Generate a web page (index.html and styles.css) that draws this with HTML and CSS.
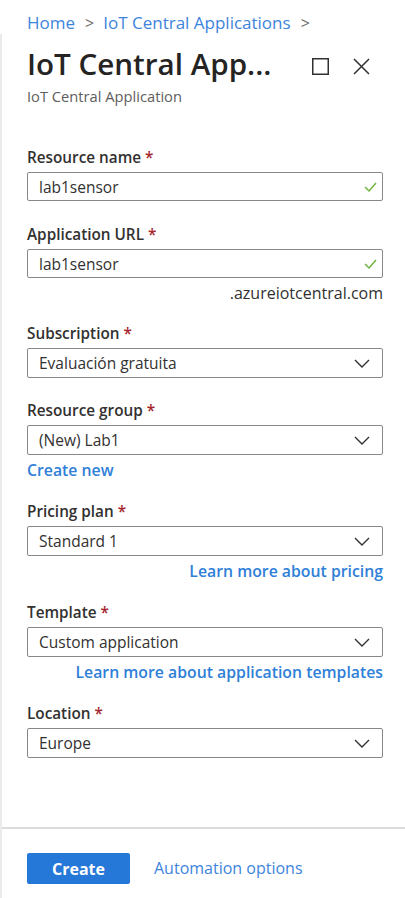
FILE: index.html
```html
<!DOCTYPE html>
<html lang="en">
<head>
<meta charset="utf-8">
<link rel="stylesheet" href="styles.css">
</head>
<body>
<nav class="crumbs">
  <a>Home</a><span class="sep">&gt;</span><a>IoT Central Applications</a><span class="sep">&gt;</span>
</nav>
<div class="panel">
  <header class="head">
    <div class="titles">
      <h1>IoT Central App...</h1>
      <div class="sub">IoT Central Application</div>
    </div>
    <div class="tools">
      <svg width="17" height="17" viewBox="0 0 17 17"><rect x="0.75" y="0.75" width="15.5" height="15.5" fill="none" stroke="#323130" stroke-width="1.5"/></svg>
      <svg width="17" height="17" viewBox="0 0 17 17"><path d="M1 1L16 16M16 1L1 16" stroke="#323130" stroke-width="1.5" fill="none"/></svg>
    </div>
  </header>
  <main class="form">
    <div class="field tall">
      <div class="label">Resource name <span class="req">*</span></div>
      <div class="box input"><span>lab1sensor</span><svg class="ok" width="13" height="10" viewBox="0 0 13 10"><path d="M1 5l4 4 7-8" stroke="#6bb33a" stroke-width="1.4" fill="none"/></svg></div>
    </div>
    <div class="field">
      <div class="label">Application URL <span class="req">*</span></div>
      <div class="box input"><span>lab1sensor</span><svg class="ok" width="13" height="10" viewBox="0 0 13 10"><path d="M1 5l4 4 7-8" stroke="#6bb33a" stroke-width="1.4" fill="none"/></svg></div>
      <div class="suffix">.azureiotcentral.com</div>
    </div>
    <div class="field">
      <div class="label">Subscription <span class="req">*</span></div>
      <div class="box"><span>Evaluación gratuita</span><svg class="chev" width="16" height="9" viewBox="0 0 16 9"><path d="M1 1l7 7 7-7" stroke="#323130" stroke-width="1.4" fill="none"/></svg></div>
    </div>
    <div class="field">
      <div class="label">Resource group <span class="req">*</span></div>
      <div class="box"><span>(New) Lab1</span><svg class="chev" width="16" height="9" viewBox="0 0 16 9"><path d="M1 1l7 7 7-7" stroke="#323130" stroke-width="1.4" fill="none"/></svg></div>
      <a class="link left">Create new</a>
    </div>
    <div class="field">
      <div class="label">Pricing plan <span class="req">*</span></div>
      <div class="box"><span>Standard 1</span><svg class="chev" width="16" height="9" viewBox="0 0 16 9"><path d="M1 1l7 7 7-7" stroke="#323130" stroke-width="1.4" fill="none"/></svg></div>
      <a class="link right">Learn more about pricing</a>
    </div>
    <div class="field">
      <div class="label">Template <span class="req">*</span></div>
      <div class="box"><span>Custom application</span><svg class="chev" width="16" height="9" viewBox="0 0 16 9"><path d="M1 1l7 7 7-7" stroke="#323130" stroke-width="1.4" fill="none"/></svg></div>
      <a class="link right">Learn more about application templates</a>
    </div>
    <div class="field">
      <div class="label">Location <span class="req">*</span></div>
      <div class="box"><span>Europe</span><svg class="chev" width="16" height="9" viewBox="0 0 16 9"><path d="M1 1l7 7 7-7" stroke="#323130" stroke-width="1.4" fill="none"/></svg></div>
    </div>
  </main>
  <footer class="foot">
    <button class="btn">Create</button>
    <a class="auto">Automation options</a>
  </footer>
</div>
</body>
</html>
```
FILE: styles.css
```css
html, body {
  margin: 0;
  padding: 0;
  background: #fff;
  font-family: "Open Sans", "Noto Sans", sans-serif;
  color: #323130;
}
body {
  width: 405px;
  height: 898px;
  overflow: hidden;
}
.crumbs {
  padding: 12px 0 0 27px;
  height: 22px;
  font-size: 17px;
  line-height: 22px;
  color: #3d84dc;
  display: flex;
  align-items: center;
}
.crumbs .sep {
  color: #6b6b6b;
  margin: 0 9px 0 10px;
  font-size: 16px;
}
.panel {
  border-left: 2px solid #ebebeb;
  height: 864px;
  display: flex;
  flex-direction: column;
  box-sizing: border-box;
}
.head {
  display: flex;
  padding: 12px 0 0 25px;
  height: 112px;
  box-sizing: border-box;
}
.titles { flex: 1; }
h1 {
  margin: 0;
  font-size: 29.6px;
  line-height: 36px;
  font-weight: 600;
  color: #252423;
  white-space: nowrap;
}
.sub {
  font-size: 14.7px;
  line-height: 20px;
  color: #605e5c;
  margin-top: 4px;
}
.tools {
  display: flex;
  gap: 24px;
  padding: 12px 35px 0 0;
  align-items: flex-start;
}
.form {
  padding: 0 22px 0 25px;
  flex: 1;
}
.field {
  display: flex;
  flex-direction: column;
  margin-bottom: 21px;
}
.field.tall { margin-bottom: 22px; }
.label {
  font-size: 15.3px;
  font-weight: 600;
  line-height: 22px;
  margin-bottom: 4px;
}
.req { color: #a4262c; }
.box {
  height: 30px;
  border: 1px solid #8a8886;
  border-radius: 2px;
  display: flex;
  align-items: center;
  padding: 0 5px 0 11px;
  font-size: 15.5px;
  box-sizing: border-box;
}
.box.input { height: 29px; }
.box span { flex: 1; }
.box .chev { margin-right: 7px; }
.suffix {
  text-align: right;
  font-size: 16px;
  line-height: 20px;
  margin-top: 5px;
  margin-bottom: -2px;
}
.link {
  color: #2f7fd8;
  font-weight: 600;
  font-size: 15.8px;
  line-height: 20px;
  margin-top: 5px;
  margin-bottom: -1px;
}
.link.right { text-align: right; }
.foot {
  border-top: 2px solid #dcdcdc;
  height: 71px;
  display: flex;
  align-items: flex-start;
  padding: 24px 0 0 25px;
  box-sizing: border-box;
  gap: 24px;
}
.btn {
  width: 103px;
  height: 31px;
  border: none;
  border-radius: 2px;
  background: #2678d8;
  color: #fff;
  font-family: inherit;
  font-weight: 700;
  font-size: 16px;
}
.auto {
  color: #3d84dc;
  font-size: 16px;
  line-height: 31px;
}
```
